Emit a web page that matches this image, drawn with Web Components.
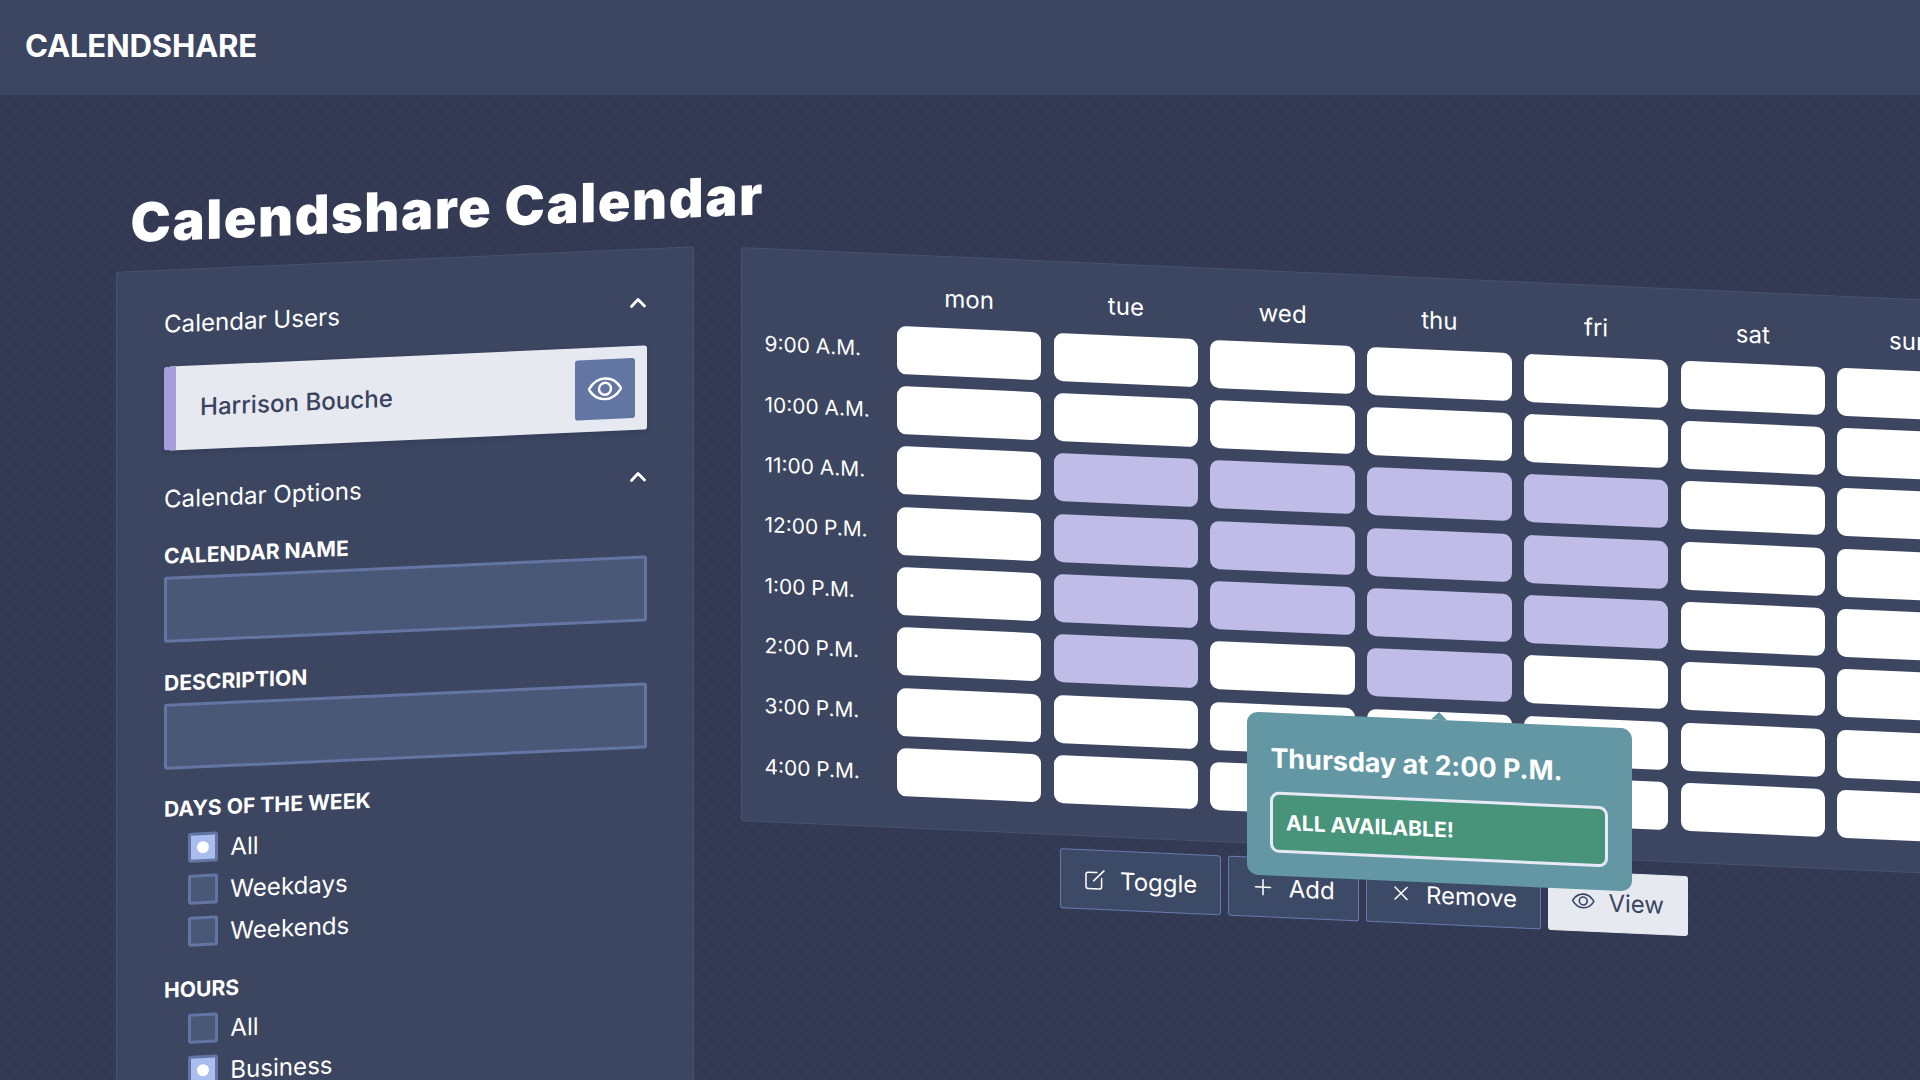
<!DOCTYPE html>
<html lang="en">
<head>
<meta charset="utf-8">
<title>Calendshare</title>
<style>
  html, body { margin: 0; height: 100%; }
  body { overflow: hidden; background: #333a54; color: #fff; font-family: Inter, sans-serif; font-size: 24.1px; }
</style>
</head>
<body>
<calendshare-app></calendshare-app>
<script>
const define = (name, html, setup) => {
  const t = document.createElement('template');
  t.innerHTML = html;
  customElements.define(name, class extends HTMLElement {
    connectedCallback() {
      if (this.shadowRoot) return;
      const r = this.attachShadow({ mode: 'open' });
      r.append(t.content.cloneNode(true));
      if (setup) setup(this, r);
    }
  });
};

const ICONS = {
  eye: ['0 0 34 23', '<path d="M1.3 12.2Q.9 11.5 1.3 10.8C5 4.8 10.5 1.2 17 1.2S29 4.8 32.7 10.8Q33.1 11.5 32.7 12.2C29 18.2 23.5 21.8 17 21.8S5 18.2 1.3 12.2Z"/><circle cx="17" cy="11.5" r="6"/>', 2.4],
  up: ['0 0 16 10', '<path d="M1.5 8.4 8 1.7l6.5 6.7"/>', 2.8],
  edit: ['0 0 20 20', '<path d="M11.8 2.8H3.2Q1 2.8 1 5v12Q1 19.2 3.2 19.2h11.2Q16.6 19.2 16.6 17V8.5M8.6 11.2 19 .8"/>', 1.5],
  plus: ['0 0 20 20', '<path d="M10 2.5v15M2.5 10h15"/>', 1.5],
  cross: ['0 0 20 20', '<path d="m4 4 12 12M16 4 4 16"/>', 1.5]
};
define('cs-icon', `<style>:host{display:inline-flex;flex:none}svg{display:block;width:100%;height:100%;fill:none;stroke:currentColor;stroke-linecap:round;stroke-linejoin:round;overflow:visible}</style><svg></svg>`,
  (el, r) => {
    const [box, body, w] = ICONS[el.getAttribute('name')];
    const svg = r.querySelector('svg');
    svg.setAttribute('viewBox', box);
    svg.setAttribute('stroke-width', w);
    svg.innerHTML = body;
  });

define('cs-header', `<style>
  :host{display:flex;box-sizing:border-box;height:95px;padding:0 25px 2.5px;align-items:center;background:#3c4661;font-weight:700;font-size:31.2px;line-height:1;letter-spacing:-.27px}
</style><slot></slot>`);

define('cs-card', `<style>
  :host{display:block;box-sizing:border-box;border:1px solid #46526e;border-radius:3px;background:#3c4661}
</style><slot></slot>`);

define('cs-section', `<style>
  :host{display:block}
  header{display:flex;align-items:center;justify-content:space-between;height:30px}
  header span{padding-top:3.5px}
  cs-icon{width:16px;height:10px;margin-right:1px}
</style><header><span><slot name="title"></slot></span><cs-icon name="up"></cs-icon></header><slot></slot>`);

define('cs-user', `<style>
  :host{display:flex;box-sizing:border-box;height:84.3px;padding:0 12px 0 24px;align-items:center;justify-content:space-between;border-left:12px solid #a59ddc;border-radius:3px;background:#e7e9f1;color:#3a4460;font-weight:500;box-shadow:0 2px 5px rgba(30,36,58,.25)}
  span{padding-top:1px}
  button{all:unset;display:flex;width:60px;height:60px;align-items:center;justify-content:center;border-radius:3px;background:#6375a3;color:#fff}
  cs-icon{width:34px;height:23px}
</style><span><slot></slot></span><button><cs-icon name="eye"></cs-icon></button>`);

define('cs-field', `<style>
  :host{display:block}
  .l{display:block;height:24px;line-height:24px;font-size:21.1px;font-weight:700}
  .i{box-sizing:border-box;height:66px;margin-top:8.2px;border:3px solid #6375a3;border-radius:3px;background:#4a5878}
</style><span class="l"><slot></slot></span><div class="i"></div>`);

define('cs-choices', `<style>
  :host{display:block}
  .l{display:block;height:24px;line-height:24px;font-size:21.1px;font-weight:700}
  div{display:flex;flex-direction:column;gap:12px;padding:11.8px 0 0 24px}
</style><span class="l"><slot name="title"></slot></span><div><slot></slot></div>`);

define('cs-choice', `<style>
  :host{display:flex;height:30.2px;align-items:center;gap:12px;line-height:30px}
  i{display:flex;box-sizing:border-box;width:30.3px;height:30.2px;align-items:center;justify-content:center;border:3px solid #6375a3;border-radius:3px;background:#4a5878}
  span{padding-top:2px}
  :host([checked]) i{background:#a9bdee}
  :host([checked]) i::after{content:"";width:12px;height:12px;border-radius:50%;background:#fff}
</style><i></i><span><slot></slot></span>`);

define('cs-tooltip', `<style>
  :host{position:absolute;z-index:2;box-sizing:border-box;width:384.7px;height:162.3px;padding:24px 24px 0 23.5px;border-radius:11px;background:#6297a3;line-height:1}
  :host::before{content:"";position:absolute;left:50%;top:-8.5px;margin-left:-8.5px;border:8.5px solid transparent;border-top:0;border-bottom-color:#6297a3}
  h3{margin:0;height:55px;line-height:44px;font-size:27px;font-weight:700;letter-spacing:-.05px;white-space:nowrap}
  div{display:flex;box-sizing:border-box;height:60.3px;padding-left:12.6px;align-items:center;border:3px solid #e7e9f6;border-radius:9px;background:#47947a;font-size:21.1px;font-weight:700}
</style><h3><slot name="title"></slot></h3><div><slot></slot></div>`);

define('cs-schedule', `<style>
  :host{display:block;position:relative}
  .g{display:grid;grid-template-columns:120px repeat(7,144.5px);column-gap:12.25px;row-gap:12.33px;grid-template-rows:48px repeat(8,48px)}
  .d{display:flex;align-items:center;justify-content:center;padding-top:15px}
  .t{display:flex;align-items:center;font-size:20.9px;padding-top:1px;white-space:nowrap}
  .c{border-radius:9px;background:#fff}
  .on{background:#bfbce8}
  cs-tooltip{left:482.3px;top:431px}
</style><div class="g"></div><cs-tooltip><span slot="title">Thursday at 2:00 P.M.</span>ALL AVAILABLE!</cs-tooltip>`,
  (el, r) => {
    const days = ['mon','tue','wed','thu','fri','sat','sun'];
    const rows = [['9:00 A.M.',''],['10:00 A.M.',''],['11:00 A.M.','1234'],['12:00 P.M.','1234'],['1:00 P.M.','1234'],['2:00 P.M.','13'],['3:00 P.M.',''],['4:00 P.M.','']];
    r.querySelector('.g').innerHTML = '<span></span>' + days.map(d => `<span class="d">${d}</span>`).join('') +
      rows.map(([t, on]) => `<span class="t">${t}</span>` + days.map((_, i) => `<span class="c${on.includes(i) ? ' on' : ''}"></span>`).join('')).join('');
  });

define('cs-tool', `<style>
  :host{display:flex;box-sizing:border-box;height:59.7px;padding:1px 23px 0 24px;align-items:center;gap:15.2px;font-size:24px;border:1px solid #667ab0;border-radius:3px;background:rgba(66,81,111,.7)}
  :host([active]){background:#e7e9f1;border-color:#e7e9f1;color:#3a4460}
  .i{display:flex;width:20px;height:20px;margin-bottom:1.5px;align-items:center;justify-content:center}
  cs-icon{width:20px;height:20px}
  cs-icon[name=eye]{width:22.5px;height:15.2px}
</style><span class="i"></span><span><slot></slot></span>`,
  (el, r) => {
    const icon = document.createElement('cs-icon');
    icon.setAttribute('name', el.getAttribute('icon'));
    r.querySelector('.i').append(icon);
  });

define('calendshare-app', `<style>
  :host{display:block;height:1080px;overflow:hidden;line-height:30px;background:#333a54 repeating-conic-gradient(#333953 0 25%,#343b55 0 50%) 0 0/12px 12px}
  main{display:flex;gap:45.9px;padding-left:116.3px;align-items:flex-start}
  .left{flex:none;width:578.4px;transform:skewY(-2.54deg);transform-origin:0 0;padding-top:93px}
  h1{margin:0 0 12px;height:72px;padding-left:14.5px;line-height:72px;font-size:54px;font-weight:900;letter-spacing:1.55px;white-space:nowrap}
  .side{height:1000px;padding:37.6px 46.2px 0 47px}
  cs-user{margin-top:28px}
  .opts{margin-top:32.6px}
  .fields{display:flex;flex-direction:column;padding-top:31.6px;gap:28.3px}
  cs-choices+cs-choices{margin-top:2.3px}
  .right{flex:none;width:1265.8px;transform:skewY(2.54deg);transform-origin:0 0;padding-top:151.7px}
  .cal{height:574.8px;padding:10.8px 0 0 22.6px}
  nav{display:flex;justify-content:center;gap:7.2px;margin-top:12.9px}
</style>
<cs-header>CALENDSHARE</cs-header>
<main>
  <div class="left">
    <h1>Calendshare Calendar</h1>
    <cs-card class="side">
      <cs-section><span slot="title">Calendar Users</span><cs-user>Harrison Bouche</cs-user></cs-section>
      <cs-section class="opts"><span slot="title">Calendar Options</span>
        <div class="fields">
          <cs-field>CALENDAR NAME</cs-field>
          <cs-field>DESCRIPTION</cs-field>
          <cs-choices><span slot="title">DAYS OF THE WEEK</span><cs-choice checked>All</cs-choice><cs-choice>Weekdays</cs-choice><cs-choice>Weekends</cs-choice></cs-choices>
          <cs-choices><span slot="title">HOURS</span><cs-choice>All</cs-choice><cs-choice checked>Business</cs-choice></cs-choices>
        </div>
      </cs-section>
    </cs-card>
  </div>
  <div class="right">
    <cs-card class="cal"><cs-schedule></cs-schedule></cs-card>
    <nav><cs-tool icon="edit">Toggle</cs-tool><cs-tool icon="plus">Add</cs-tool><cs-tool icon="cross">Remove</cs-tool><cs-tool icon="eye" active>View</cs-tool></nav>
  </div>
</main>`);
</script>
</body>
</html>
